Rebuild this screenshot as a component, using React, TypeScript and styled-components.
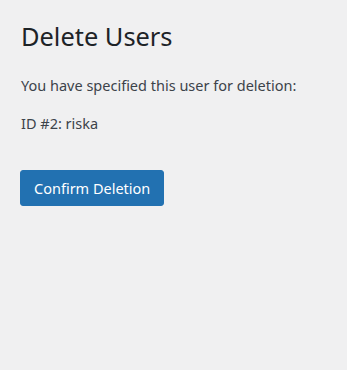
import React from 'react';
import styled, { createGlobalStyle } from 'styled-components';

const GlobalStyle = createGlobalStyle`
  html, body {
    margin: 0;
    padding: 0;
    background: #f0f0f1;
  }
  body {
    font-family: "Noto Sans", "Open Sans", sans-serif;
    color: #3c434a;
    min-height: 370px;
  }
`;

const Wrap = styled.div`
  padding: 19px 20px 0 21px;
`;

const Title = styled.h1`
  margin: 0 0 22px;
  font-size: 25.4px;
  font-weight: 400;
  line-height: 34px;
  color: #1d2327;
`;

const Text = styled.p`
  margin: 0 0 16px;
  font-size: 14.5px;
  line-height: 1.5;
`;

const Submit = styled.p`
  margin: 35px 0 0;
`;

const Button = styled.button`
  display: inline-flex;
  align-items: center;
  margin-left: -1px;
  height: 36px;
  padding: 0 13px;
  border: 1px solid #2271b1;
  border-radius: 3px;
  background: #2271b1;
  color: #fff;
  font-family: inherit;
  font-size: 14.5px;
  cursor: pointer;
`;

export default function App() {
  return (
    <>
      <GlobalStyle />
      <Wrap>
        <Title>Delete Users</Title>
        <Text>You have specified this user for deletion:</Text>
        <Text>ID #2: riska</Text>
        <Submit>
          <Button type="button">Confirm Deletion</Button>
        </Submit>
      </Wrap>
    </>
  );
}
